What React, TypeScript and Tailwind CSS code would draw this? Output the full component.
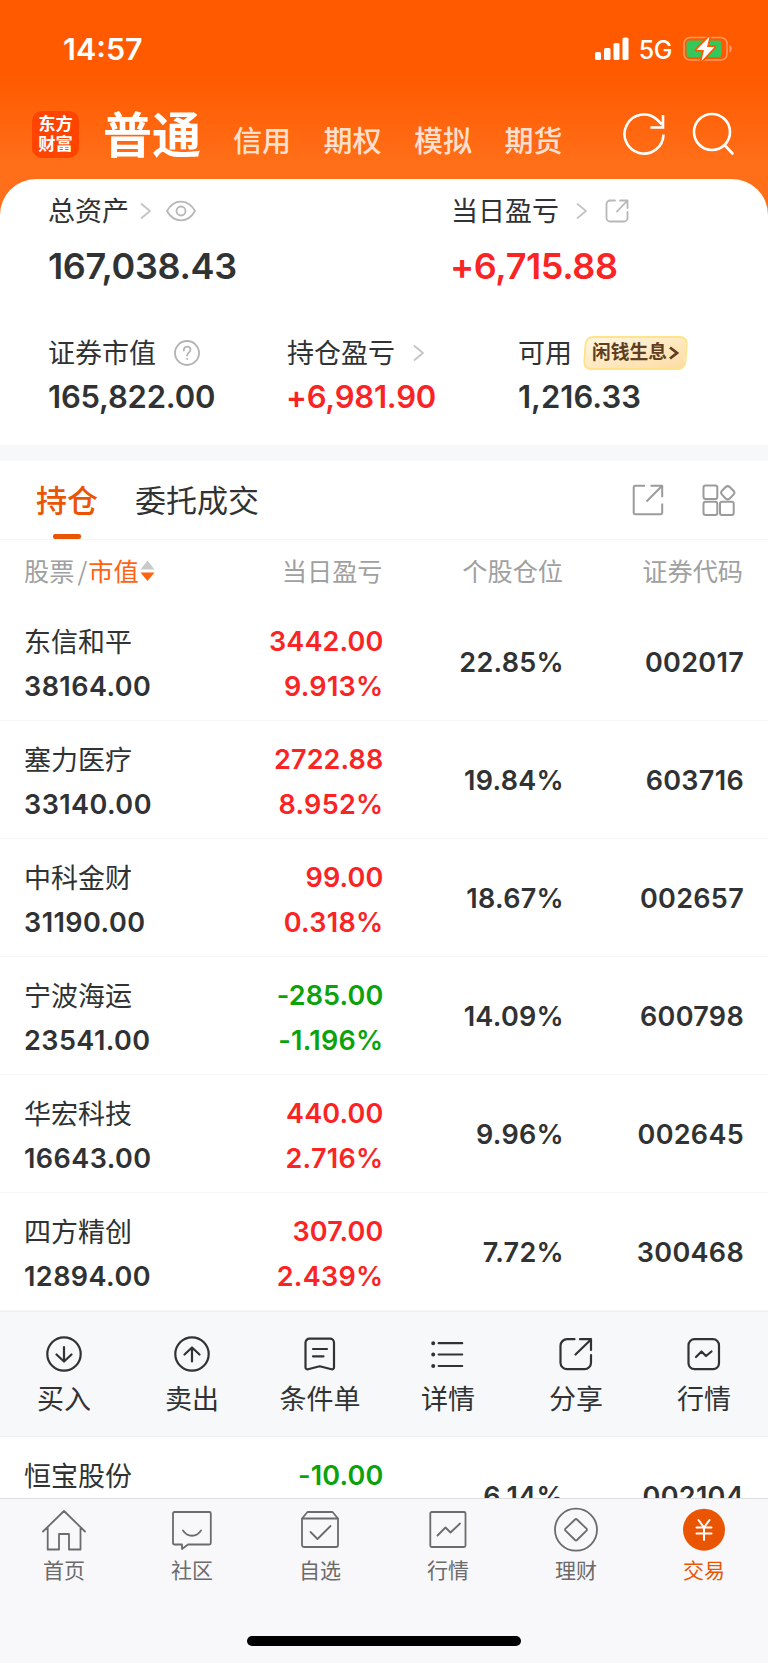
import type { ReactNode } from 'react'
import clsx from 'clsx'

const markets = ['信用', '期权', '模拟', '期货']

const positions = [
  { name: '东信和平', value: '38164.00', profit: '3442.00', rate: '9.913%', ratio: '22.85%', code: '002017' },
  { name: '塞力医疗', value: '33140.00', profit: '2722.88', rate: '8.952%', ratio: '19.84%', code: '603716' },
  { name: '中科金财', value: '31190.00', profit: '99.00', rate: '0.318%', ratio: '18.67%', code: '002657' },
  { name: '宁波海运', value: '23541.00', profit: '-285.00', rate: '-1.196%', ratio: '14.09%', code: '600798' },
  { name: '华宏科技', value: '16643.00', profit: '440.00', rate: '2.716%', ratio: '9.96%', code: '002645' },
  { name: '四方精创', value: '12894.00', profit: '307.00', rate: '2.439%', ratio: '7.72%', code: '300468' },
]

const nextPosition = { name: '恒宝股份', value: '', profit: '-10.00', rate: '', ratio: '6.14%', code: '002104' }

const Svg = ({ w, h, sw = 2, className, children }: { w: number; h: number; sw?: number; className?: string; children: ReactNode }) => (
  <svg
    width={w}
    height={h}
    viewBox={`0 0 ${w} ${h}`}
    fill="none"
    stroke="currentColor"
    strokeWidth={sw}
    strokeLinecap="round"
    strokeLinejoin="round"
    className={clsx('block shrink-0', className)}
  >
    {children}
  </svg>
)

const Chevron = ({ className }: { className?: string }) => (
  <Svg w={12} h={18} sw={1.8} className={clsx('text-[#c4c4c4]', className)}>
    <path d="M1.500 2 10 9l-8.500 7" />
  </Svg>
)

const actions = [
  {
    label: '买入',
    icon: (
      <Svg w={40} h={40} sw={2.2}>
        <circle cx="20" cy="20" r="16.700" />
        <path d="M20 13v14M12.500 20.500 20 27.500l7.500-7" />
      </Svg>
    ),
  },
  {
    label: '卖出',
    icon: (
      <Svg w={40} h={40} sw={2.2}>
        <circle cx="20" cy="20" r="16.700" />
        <path d="M20 27.500V13.500M12.500 20.500 20 13.500l7.500 7" />
      </Svg>
    ),
  },
  {
    label: '条件单',
    icon: (
      <Svg w={40} h={40} sw={2.2}>
        <path d="M9.500 4.700h20.500a4 4 0 0 1 4 4v24.500a2 2 0 0 1-2.500 2L19.700 32.300 8 35.200a2 2 0 0 1-2.500-2V8.700a4 4 0 0 1 4-4Z" />
        <path d="M13 15h14M13 22.300h10.500" />
      </Svg>
    ),
  },
  {
    label: '详情',
    icon: (
      <Svg w={40} h={40} sw={2.2}>
        <path d="M10.700 9.200h23.500M10.700 20.500h23.500M10.700 32h23.500" />
        <path d="M5.200 9.200h.01M5.200 20.500h.01M5.200 32h.01" strokeWidth="4" />
      </Svg>
    ),
  },
  {
    label: '分享',
    icon: (
      <Svg w={40} h={40} sw={2.2}>
        <path d="M18.500 5.200h-7.500a6.500 6.500 0 0 0-6.500 6.500v17a6.500 6.500 0 0 0 6.500 6.500h17.500a6.500 6.500 0 0 0 6.500-6.500V21" />
        <path d="M24 5.200h11V16M34.500 6 19.500 20.500" />
      </Svg>
    ),
  },
  {
    label: '行情',
    icon: (
      <Svg w={40} h={40} sw={2.2}>
        <rect x="4.500" y="5.200" width="30.500" height="30" rx="6" />
        <path d="m12 23 5.500-5.500 4.500 4.500 5.500-4.500" />
      </Svg>
    ),
  },
]

const navs = [
  {
    label: '首页',
    icon: (
      <Svg w={46} h={46} sw={1.8}>
        <path d="M2 24.500 23 4l21 20.500M6.700 21v21.500H18V27h10v15.500h11.500V21" />
      </Svg>
    ),
  },
  {
    label: '社区',
    icon: (
      <Svg w={46} h={46} sw={1.8}>
        <path d="M5.500 5h34.800a1.500 1.500 0 0 1 1.500 1.500V36a1.500 1.500 0 0 1-1.500 1.500H19L13 42v-4.500H5.500A1.500 1.500 0 0 1 4 36V6.500A1.500 1.500 0 0 1 5.500 5Z" />
        <path d="M14 23.500c4.500 7 13.500 7 18 0" />
      </Svg>
    ),
  },
  {
    label: '自选',
    icon: (
      <Svg w={46} h={46} sw={1.8}>
        <path d="M5 11.500h36v26.500a2 2 0 0 1-2 2H7a2 2 0 0 1-2-2ZM5 11.500 10.500 5h25L41 11.500" />
        <path d="m13.500 25 7 7L33.500 19" />
      </Svg>
    ),
  },
  {
    label: '行情',
    icon: (
      <Svg w={46} h={46} sw={1.8}>
        <rect x="5.300" y="5" width="35.200" height="35" rx="1.500" />
        <path d="m12.500 28.500 8-8 5 5 9.500-9" />
      </Svg>
    ),
  },
  {
    label: '理财',
    icon: (
      <Svg w={46} h={46} sw={1.8}>
        <circle cx="23" cy="22.700" r="21" />
        <path d="M22 12.500a1.500 1.500 0 0 1 2 0l9.500 9.200a1.500 1.500 0 0 1 0 2L24 33a1.500 1.500 0 0 1-2 0l-9.500-9.300a1.500 1.500 0 0 1 0-2Z" />
      </Svg>
    ),
  },
  {
    label: '交易',
    active: true,
    icon: (
      <Svg w={46} h={46}>
        <circle cx="23" cy="22.700" r="21" fill="currentColor" stroke="none" />
        <path d="m17.500 13 5.500 7.500 5.500-7.500M15.500 20.500h15M15.500 26.500h15M23 20.500V33" stroke="white" />
      </Svg>
    ),
  },
]

const num = "font-['Inter'] font-semibold"

const PositionRow = ({ item }: { item: (typeof positions)[number] }) => {
  const color = item.profit.startsWith('-') ? 'text-[#0aa30a]' : 'text-[#fb2424]'
  return (
    <div className="flex h-[118px] border-b border-[#f5f5f6] px-6 tracking-[0.3px]">
      <div className="w-[180px] pt-4">
        <p className="h-11 text-[27px] leading-[44px] tracking-normal">{item.name}</p>
        <p className={clsx(num, 'text-[27px] leading-[48px] tracking-[0.450px]')}>{item.value}</p>
      </div>
      <div className={clsx(num, color, 'w-[179.500px] pt-[17px] text-right text-[27px]')}>
        <p className="h-11 leading-[44px] tracking-[0.150px]">{item.profit}</p>
        <p className="leading-[45px]">{item.rate}</p>
      </div>
      <p className={clsx(num, 'w-[180.500px] text-right text-[27px] leading-[119px]')}>{item.ratio}</p>
      <p className={clsx(num, 'w-[180px] text-right text-[27px] leading-[119px]')}>{item.code}</p>
    </div>
  )
}

const App = () => {
  return (
    <div className="flex h-[1663px] w-[768px] flex-col overflow-hidden bg-white font-['Noto_Sans_CJK_SC',sans-serif] text-[#303233]">
      {/* HEADER */}
      <header className="h-[220px] shrink-0 bg-[linear-gradient(180deg,#ff5a00_0px,#ff5a00_75px,#ff6f19_165px,#ff6f19_100%)] text-white">
        <div className="flex h-[98px] items-center pr-[35px] pl-[63px]">
          <span className="mr-auto pb-px font-['Inter'] text-[30.500px] font-semibold">14:57</span>
          <svg width="34" height="24" viewBox="0 0 34 24" fill="white" className="mr-[10px]">
            <rect x="0" y="15" width="6" height="8" rx="1.500" />
            <rect x="9" y="11" width="6.500" height="12" rx="1.500" />
            <rect x="18.500" y="6" width="6" height="17" rx="1.500" />
            <rect x="27.500" y="0.500" width="6" height="22.500" rx="1.500" />
          </svg>
          <span className="mr-[11px] pt-[3px] font-['Inter'] text-[25px] font-medium tracking-[-0.5px]">5G</span>
          <svg width="50" height="26" viewBox="0 0 50 26">
            <rect x="1" y="1.500" width="43" height="22.500" rx="6" fill="none" stroke="#ff9c66" strokeWidth="1.500" />
            <rect x="3.500" y="4.500" width="35" height="16.500" rx="3" fill="#34c759" />
            <path d="M46.500 9v7.500c3-1 3-6.500 0-7.500Z" fill="#ff9c66" />
            <path d="M26.500 0.500 13.500 14h7.500L18.500 25 31.500 11h-7.500Z" fill="white" stroke="#ff5a00" strokeWidth="3.500" paintOrder="stroke" strokeLinejoin="round" />
          </svg>
        </div>
        <div className="flex h-[72px] items-center pr-[33px] pl-8">
          <div className="flex h-[47px] w-[47px] flex-col items-center justify-center rounded-[10px] bg-[#ff4400] pb-0.5 text-[17.300px] leading-[20.500px] font-bold">
            <span>东方</span>
            <span>财富</span>
          </div>
          <h1 className="ml-6 pb-[5px] text-[49px] leading-[66px] font-bold">普通</h1>
          <nav className="mt-3 ml-8 flex gap-[32.500px] text-[29px] font-medium text-[#ffe0cf]">
            {markets.map((m) => (
              <span key={m}>{m}</span>
            ))}
          </nav>
          <Svg w={44} h={46} sw={2.6} className="mr-[25px] ml-auto">
            <path d="M41.500 23.500A19.500 19.500 0 1 1 35 8.500L40 13.500" strokeLinecap="butt" strokeLinejoin="miter" />
            <path d="M41 4v12.500H28.500" strokeLinecap="butt" strokeLinejoin="miter" />
          </Svg>
          <Svg w={44} h={46} sw={2.6}>
            <circle cx="21" cy="21" r="18" />
            <path d="m34 34.500 7.500 8" />
          </Svg>
        </div>
      </header>

      {/* ASSETS */}
      <section className="-mt-[41px] h-[266px] shrink-0 rounded-t-[36px] bg-white">
        <div className="flex pt-3 pl-12">
          <div className="w-[403px]">
            <div className="flex h-10 items-center text-[27px]">
              <span className="-mt-px">总资产</span>
              <Chevron className="ml-[11px]" />
              <Svg w={30} h={22} sw={1.8} className="ml-[14px] text-[#b5b7b8]">
                <path d="M1 11C8-1.500 22-1.500 29 11 22 23.500 8 23.500 1 11Z" />
                <circle cx="15" cy="11" r="4.500" />
              </Svg>
            </div>
            <p className={clsx(num, 'mt-[11px] text-[36px] leading-[48px] tracking-[-0.350px]')}>167,038.43</p>
          </div>
          <div>
            <div className="flex h-10 items-center text-[27px]">
              <span className="-mt-px">当日盈亏</span>
              <Chevron className="ml-[17px]" />
              <Svg w={24} h={24} sw={1.8} className="ml-[17px] text-[#b5b7b8]">
                <path d="M10 1.500H5A3.500 3.500 0 0 0 1.500 5v14A3.500 3.500 0 0 0 5 22.500h14a3.500 3.500 0 0 0 3.500-3.500v-6" />
                <path d="M15 1.500h7.500V9M22 2 12 12.500" />
              </Svg>
            </div>
            <p className={clsx(num, 'mt-[11px] -ml-px text-[36px] leading-[48px] tracking-[-0.400px] text-[#fb2424]')}>+6,715.88</p>
          </div>
        </div>
        <div className="mt-[43px] flex pl-12">
          <div className="w-[239px]">
            <div className="flex h-10 items-center text-[27px]">
              <span className="-mt-px">证券市值</span>
              <Svg w={26} h={26} sw={1.8} className="ml-[18px] text-[#b0b2b3]">
                <circle cx="13" cy="13" r="12" />
                <path d="M9.800 10.500c0-5 6.700-5 6.700-.8 0 2.500-3.300 2.800-3.300 5.800M13.200 18.800v.2" />
              </Svg>
            </div>
            <p className={clsx(num, 'mt-1 text-[31px] leading-10 tracking-[-0.200px]')}>165,822.00</p>
          </div>
          <div className="w-[231px]">
            <div className="flex h-10 items-center text-[27px]">
              <span className="-mt-px">持仓盈亏</span>
              <Chevron className="ml-[18px]" />
            </div>
            <p className={clsx(num, 'mt-1 -ml-px text-[31px] leading-10 tracking-[-0.200px] text-[#fb2424]')}>+6,981.90</p>
          </div>
          <div>
            <div className="flex h-10 items-center text-[27px]">
              <span className="-mt-px">可用</span>
              <div className="relative ml-3 -mt-px flex h-[34px] w-[103px] items-center justify-center">
                <div className="absolute inset-0 -skew-x-4 rounded-[8px] border-2 border-[#ffe38b] bg-linear-to-br from-[#fff6e0] to-[#fddca3]" />
                <span className="relative -mt-0.5 text-[18.800px] font-bold text-[#613d22]">闲钱生息</span>
                <Svg w={10} h={16} sw={2.8} className="relative ml-0.5 text-[#613d22]">
                  <path d="M1 2.500 8 8l-7 5.500" strokeLinecap="butt" strokeLinejoin="miter" />
                </Svg>
              </div>
            </div>
            <p className={clsx(num, 'mt-1 text-[31px] leading-10')}>1,216.33</p>
          </div>
        </div>
      </section>

      <div className="h-4 shrink-0 bg-[#f7f8fa]" />

      {/* TABS */}
      <div className="flex h-[79px] shrink-0 items-center border-b border-[#f3f4f5] pr-8 pl-9 text-[31px]">
        <div className="relative flex h-full items-center pb-[2px] font-medium text-[#ea5504]">
          持仓
          <span className="absolute bottom-0 left-[17px] h-[5px] w-7 rounded-[2px] bg-[#ea5504]" />
        </div>
        <span className="mr-auto ml-[37px] pb-[2px]">委托成交</span>
        <Svg w={32} h={32} className="mr-[38px] text-[#9b9b9b]">
          <path d="M13 1.700H3.200A1.500 1.500 0 0 0 1.700 3.200v25.500a1.500 1.500 0 0 0 1.500 1.500h25.500a1.500 1.500 0 0 0 1.500-1.500V19.500" strokeLinecap="butt" />
          <path d="M18.500 1.700h11.700v11.500M29.700 2.300 14.500 17.500" strokeLinecap="butt" />
        </Svg>
        <Svg w={34} h={32} className="text-[#9b9b9b]">
          <rect x="1.500" y="1.500" width="13.800" height="13.500" rx="2" />
          <rect x="1.500" y="17.800" width="13.800" height="13.200" rx="2" />
          <rect x="18" y="17.800" width="13.700" height="13.200" rx="2" />
          <path d="M23.700 3q2-1.800 4 0l3.800 3.800q1.800 1.900 0 3.800L27.700 14.500q-2 1.800-4 0L20 10.600q-1.800-1.900 0-3.800Z" />
        </Svg>
      </div>

      {/* POSITIONS */}
      <div className="flex h-[63px] shrink-0 items-center pr-[25px] pb-px pl-6 text-[25.200px] text-[#a0a0a0]">
        <div className="flex w-[179px] items-center">
          股票
          <span className="ml-[3px] mr-px">/</span>
          <span className="text-[#ff6210]">市值</span>
          <svg width="15" height="22" viewBox="0 0 15 22" className="ml-px">
            <path d="M7.500 0.500 14.500 9.500h-14Z" fill="#c9c9c9" />
            <path d="M.5 12.500h14l-7 8.500Z" fill="#ff6210" />
          </svg>
        </div>
        <span className="w-[179.500px] text-right">当日盈亏</span>
        <span className="w-[180.500px] text-right">个股仓位</span>
        <span className="w-[180px] text-right">证券代码</span>
      </div>
      <div className="shrink-0">
        {positions.map((item) => (
          <PositionRow key={item.code} item={item} />
        ))}
      </div>

      <div className="grid h-[126px] shrink-0 grid-cols-6 border-y border-[#eff0f2] bg-[#f7f8fa]">
        {actions.map((a) => (
          <div key={a.label} className="flex flex-col items-center pt-[22px]">
            {a.icon}
            <span className="mt-1 text-[27px] leading-10">{a.label}</span>
          </div>
        ))}
      </div>

      <div className="h-[61px] shrink-0 overflow-hidden">
        <PositionRow item={nextPosition} />
      </div>

      {/* BOTTOM NAV */}
      <footer className="flex grow flex-col items-center border-t border-[#dddfe2] bg-[#f8f8fa]">
        <nav className="grid w-full grid-cols-6 text-[#6b6b6b]">
          {navs.map((n) => (
            <div key={n.label} className={clsx('flex flex-col items-center pt-2', n.active && 'text-[#ea5504]')}>
              {n.icon}
              <span className="text-[21px] leading-8">{n.label}</span>
            </div>
          ))}
        </nav>
        <div className="mt-auto mb-[17px] h-[10px] w-[274px] rounded-full bg-black" />
      </footer>
    </div>
  )
}

export default App
